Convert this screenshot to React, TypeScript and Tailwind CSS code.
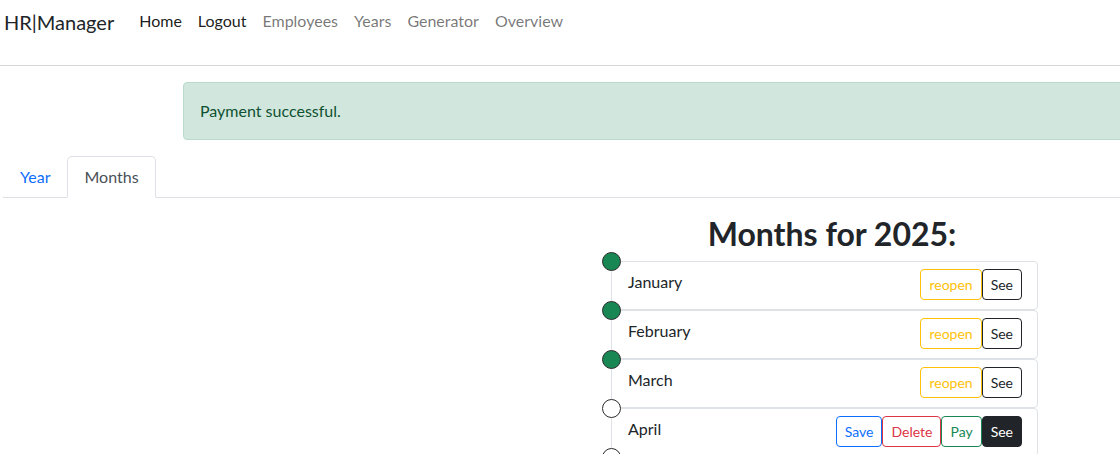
import React from "react";

type Btn = { label: string; cls: string };

const reopen: Btn = { label: "reopen", cls: "border-[#ffc107] text-[#ffc107] bg-white" };
const seeOutline: Btn = { label: "See", cls: "border-[#212529] text-[#212529] bg-white" };

const months: { name: string; done: boolean; buttons: Btn[] }[] = [
  { name: "January", done: true, buttons: [reopen, seeOutline] },
  { name: "February", done: true, buttons: [reopen, seeOutline] },
  { name: "March", done: true, buttons: [reopen, seeOutline] },
  {
    name: "April",
    done: false,
    buttons: [
      { label: "Save", cls: "border-[#0d6efd] text-[#0d6efd] bg-white" },
      { label: "Delete", cls: "border-[#dc3545] text-[#dc3545] bg-white" },
      { label: "Pay", cls: "border-[#198754] text-[#198754] bg-white" },
      { label: "See", cls: "border-[#212529] text-white bg-[#212529]" },
    ],
  },
  { name: "", done: false, buttons: [] },
];

export default function App() {
  return (
    <div
      className="w-[1120px] h-[454px] overflow-hidden bg-white text-[#212529]"
      style={{ fontFamily: 'Lato, "Noto Sans", sans-serif' }}
    >
      <nav className="flex items-start h-[66px] border-b border-[#d6d6d6] pl-[4px]">
        <div className="text-[20px] leading-[30px] mt-[7px] mr-[17px] text-[#212529]">HR|Manager</div>
        <div className="flex text-[16px] leading-[24px] mt-[9px]">
          <span className="px-[8px] text-black/90">Home</span>
          <span className="px-[8px] text-black/90">Logout</span>
          <span className="px-[8px] text-black/55">Employees</span>
          <span className="px-[8px] text-black/55">Years</span>
          <span className="px-[8px] text-black/55">Generator</span>
          <span className="px-[8px] text-black/55">Overview</span>
        </div>
      </nav>

      <div className="ml-[183px] mt-[16px] w-[1000px] h-[58px] bg-[#d1e7dd] border border-[#badbcc] rounded-[4px] text-[#0f5132] text-[16px] leading-[24px] px-[16px] pt-[16px]">
        Payment successful.
      </div>

      <div className="ml-[3px] mt-[16px] flex items-end h-[42px] border-b border-[#dee2e6] text-[16px]">
        <div className="px-[17px] h-[41px] flex items-center text-[#0d6efd]">Year</div>
        <div className="px-[16px] h-[42px] flex items-center text-[#495057] border border-[#dee2e6] border-b-white bg-white rounded-t-[5px] -mb-px">
          Months
        </div>
      </div>

      <div className="ml-[603px] w-[458px] mt-[17px]">
        <h2 className="text-center text-[32px] leading-[38px] font-bold text-[#212529]">Months for 2025:</h2>
        <div className="ml-[8px] w-[427px] mt-[8px] flex flex-col">
          {months.map((m, idx) => (
            <div key={idx} className="relative h-[49px] border border-[#dee2e6] rounded-[4px] bg-white flex items-center pl-[16px] pr-[15px]">
              <span
                className={`absolute -left-[10px] -top-[10px] w-[19px] h-[19px] rounded-full border border-[#2b2b2b] ${
                  m.done ? "bg-[#198754]" : "bg-white"
                }`}
              />
              {m.name && <span className="text-[16px] leading-[24px] -mt-[7px]">{m.name}</span>}
              <div className="ml-auto flex -mt-[3px]">
                {m.buttons.map((b, i) => (
                  <span
                    key={i}
                    className={`h-[31px] px-[8px] flex items-center border rounded-[4px] text-[14px] leading-[21px] ${b.cls}`}
                  >
                    {b.label}
                  </span>
                ))}
              </div>
            </div>
          ))}
        </div>
      </div>
    </div>
  );
}
